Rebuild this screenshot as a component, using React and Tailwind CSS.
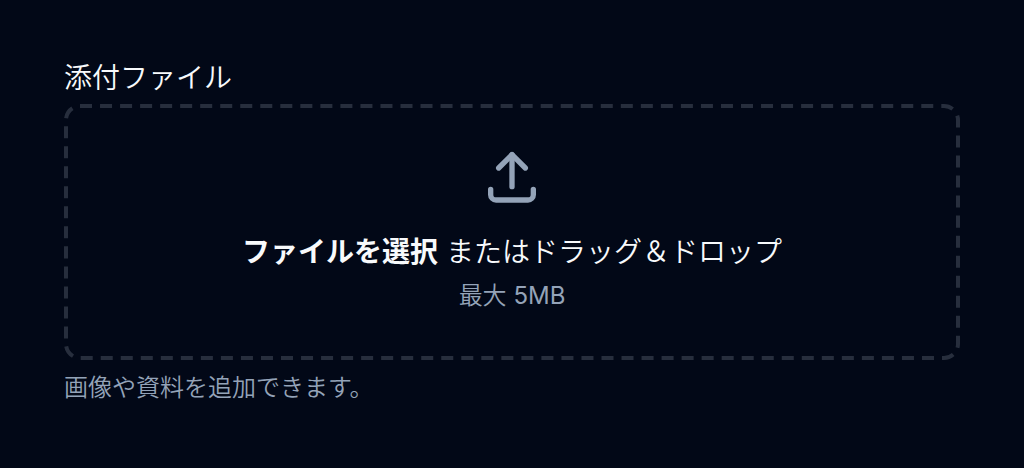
import { useState } from "react";

const UploadIcon = () => (
  <svg
    viewBox="0 0 24 24"
    fill="none"
    stroke="currentColor"
    strokeWidth="2"
    strokeLinecap="round"
    strokeLinejoin="round"
    className="size-16 text-[#94a3b8]"
    aria-hidden="true"
  >
    <path d="M4 17v2a2 2 0 0 0 2 2h12a2 2 0 0 0 2 -2v-2" />
    <path d="M7 9l5 -5l5 5" />
    <path d="M12 4v12" />
  </svg>
);

// Long dashes that the CSS dashed style can't draw at this thickness
const DashedOutline = () => (
  <svg
    className="pointer-events-none absolute inset-0.5 h-[calc(100%-4px)] w-[calc(100%-4px)] overflow-visible text-[#272e3d]"
    aria-hidden="true"
  >
    <rect
      width="100%"
      height="100%"
      rx="14"
      fill="none"
      stroke="currentColor"
      strokeWidth="4"
      strokeDasharray="12 8"
      pathLength="2260"
    />
  </svg>
);

export default function App() {
  const [, setFiles] = useState([]);

  return (
    <main className="min-h-screen bg-[#020817] px-16 pt-14 pb-16 font-['Inter','Noto_Sans_CJK_JP',sans-serif] font-[350] text-[#f8fafc]">
      <label htmlFor="attachment" className="block text-[28px] leading-[44px]">
        添付ファイル
      </label>
      <label
        htmlFor="attachment"
        className="relative mt-1 flex cursor-pointer flex-col items-center rounded-2xl px-1 pt-10 pb-12"
      >
        <DashedOutline />
        <UploadIcon />
        <span className="mt-6 text-[28px] leading-[40px]">
          <span className="font-bold">ファイルを選択</span> またはドラッグ＆ドロップ
        </span>
        <span className="mt-2 text-2xl text-[#94a3b8]">
          最大 <span className="font-normal">5MB</span>
        </span>
        <input
          id="attachment"
          type="file"
          className="sr-only"
          aria-describedby="attachment-help"
          onChange={(e) => setFiles([...e.target.files])}
        />
      </label>
      <p id="attachment-help" className="mt-3 text-2xl text-[#94a3b8]">
        画像や資料を追加できます。
      </p>
    </main>
  );
}
